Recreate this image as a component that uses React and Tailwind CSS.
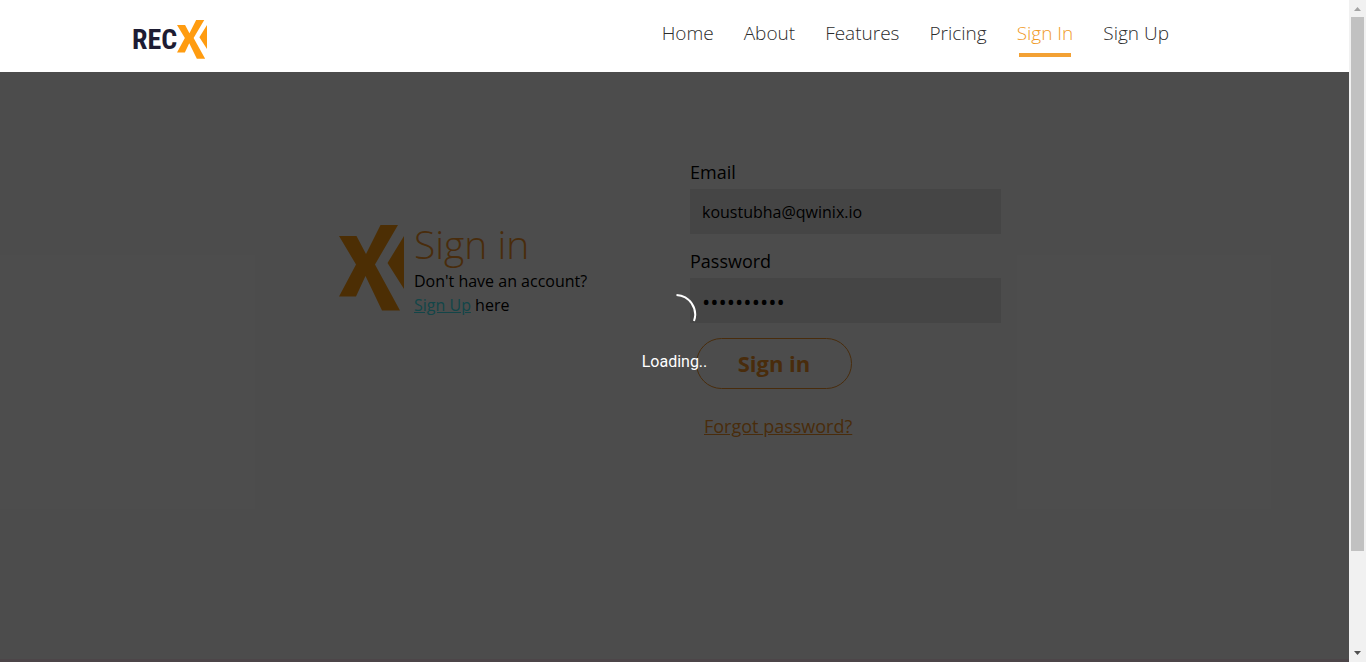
import React from "react";

const links = ["Home", "About", "Features", "Pricing", "Sign In", "Sign Up"];

function Mark({ className }) {
  return (
    <svg viewBox="0 0 65 86" preserveAspectRatio="none" className={className} aria-hidden="true">
      <path
        fill="currentColor"
        d="M0 11h17.500L27 29 41.500 0H59L36 39.500 61 85.500H43L26.500 51 17 71.500H0L17 39.500ZM65 11V64L48.500 38Z"
      />
    </svg>
  );
}

function Header() {
  return (
    <header className="flex h-[72px] items-start justify-between bg-white pl-[132px] pr-[180px]">
      <a href="#home" aria-label="RECX" className="mt-5 flex items-center text-[#1d1c33]">
        <span className="font-['Roboto_Condensed','Roboto',sans-serif] text-[28px] font-bold leading-none">
          REC
        </span>
        <Mark className="h-[39px] w-[30px] text-[#ff9c10]" />
      </a>
      <nav className="mt-[18px] flex gap-[30px]">
        {links.map((name) => {
          const active = name === "Sign In";
          return (
            <a
              key={name}
              href={"#" + name.toLowerCase().replace(" ", "-")}
              className={
                active
                  ? "flex flex-col gap-[5px] text-[19px] font-light leading-[30px] text-[#f09a26]"
                  : "text-[19px] font-light leading-[30px] text-[#2c2c2c]"
              }
            >
              {name}
              {active && <span className="mx-0.5 h-1 bg-[#f3a134]" />}
            </a>
          );
        })}
      </nav>
    </header>
  );
}

function Field({ id, label, type, value }) {
  const size = type === "password" ? "text-[22px]" : "text-[16px]";
  return (
    <div className="mb-[11px]">
      <label htmlFor={id} className="block pb-px text-[18px] leading-8">
        {label}
      </label>
      <input
        id={id}
        type={type}
        defaultValue={value}
        className={"block h-[45px] w-full bg-[#e8e8e8] px-3 text-black outline-none " + size}
      />
    </div>
  );
}

function Loading() {
  return (
    <div role="status" className="absolute inset-0 flex flex-col items-center bg-black/70 pt-[221px] text-white">
      <svg viewBox="0 0 44 44" className="h-11 w-11" fill="none" aria-hidden="true">
        <path d="M23.500 2A19.500 19.500 0 0 1 41 28" stroke="currentColor" strokeWidth="2" />
      </svg>
      <p className="mt-[13px] font-['Roboto',sans-serif] text-[16px] leading-6">Loading..</p>
    </div>
  );
}

function ScrollBar() {
  return (
    <div className="flex w-[17px] shrink-0 flex-col items-center bg-[#f1f1f1]" aria-hidden="true">
      <svg viewBox="0 0 17 17" className="h-[17px] w-[17px] shrink-0">
        <path d="M5 11h7L8.500 7Z" fill="#a3a3a3" />
      </svg>
      <div className="flex w-[13px] grow flex-col">
        <div className="h-[85%] bg-[#c1c1c1]" />
      </div>
      <svg viewBox="0 0 17 17" className="h-[17px] w-[17px] shrink-0">
        <path d="M5 6h7L8.500 10Z" fill="#505050" />
      </svg>
    </div>
  );
}

export default function App() {
  return (
    <div className="flex min-h-screen font-['Open_Sans','Noto_Sans',sans-serif] text-black">
      <div className="flex min-w-0 grow flex-col">
        <Header />
        <div className="relative flex grow flex-col bg-white">
          <main className="flex grow justify-center pr-[9px] pt-[84px]">
            <section className="mt-[63px] flex w-[351px] items-center gap-[10px] self-start">
              <Mark className="h-[86px] w-[65px] shrink-0 text-[#ff9c10]" />
              <div className="text-[16px] leading-6">
                <h1 className="text-[39px] font-light leading-[50px] text-[#f39428]">Sign in</h1>
                <p>Don't have an account?</p>
                <p>
                  <a href="#sign-up" className="text-[#40e8f0] underline">Sign Up</a> here
                </p>
              </div>
            </section>
            <form className="w-[311px]" onSubmit={(event) => event.preventDefault()}>
              <Field id="email" label="Email" type="email" value="koustubha@qwinix.io" />
              <Field id="password" label="Password" type="password" value="recxsignin" />
              <div className="mt-[15px] flex flex-col items-start pl-[6px]">
                <button
                  type="submit"
                  className="h-[51px] w-[156px] rounded-full border border-[#f39428] text-[22px] font-bold text-[#f39428]"
                >
                  Sign in
                </button>
                <a href="#forgot" className="ml-2 mt-[22px] text-[18px] leading-[30px] text-[#f39428] underline">
                  Forgot password?
                </a>
              </div>
            </form>
          </main>
          <footer className="h-[3px] bg-[#ffe8f0]" />
          <Loading />
        </div>
      </div>
      <ScrollBar />
    </div>
  );
}
